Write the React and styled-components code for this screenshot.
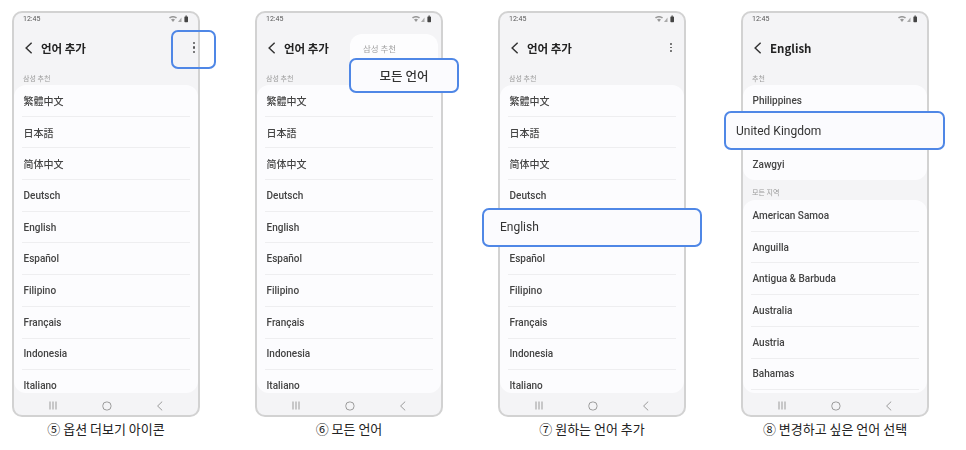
import React from 'react';
import styled, { createGlobalStyle } from 'styled-components';

const GlobalStyle = createGlobalStyle`
  html, body {
    margin: 0;
    padding: 0;
    background: #fff;
  }
  body {
    font-family: Roboto, "Noto Sans CJK KR", sans-serif;
  }
`;

const LANGUAGES = ['繁體中文', '日本語', '简体中文', 'Deutsch', 'English', 'Español', 'Filipino', 'Français', 'Indonesia', 'Italiano'];
const SUGGESTED = ['Philippines', 'United Kingdom', 'Zawgyi'];
const REGIONS = ['American Samoa', 'Anguilla', 'Antigua & Barbuda', 'Australia', 'Austria', 'Bahamas'];

const BackIcon = ({ size = 10, color = '#333', width = 1.2 }) => (
  <svg width={size} height={size} viewBox="0 0 10 10" fill="none">
    <path d="M7.2 .6 2.6 5l4.6 4.4" stroke={color} strokeWidth={width} />
  </svg>
);

const StatusIcons = () => (
  <svg width="20" height="8" viewBox="0 0 20 8">
    <path d="M0 2.4C2.4 .4 5.6 .4 8 2.4L7 3.5C5 2 3 2 1 3.5ZM2 4.4C3.2 3.4 4.8 3.4 6 4.4L4 7Z" fill="#999" />
    <path d="M9 7 12.5 2.6V7Z" fill="#aaa" />
    <rect x="15.4" y="1.4" width="3.6" height="5.8" rx=".7" fill="#444" />
    <rect x="16.4" y=".6" width="1.6" height="1" fill="#444" />
  </svg>
);

const NavIcons = () => (
  <>
    <svg width="10" height="9" viewBox="0 0 10 9" fill="none">
      <path d="M2 .5v8M5 .5v8M8 .5v8" stroke="#9a9a9a" strokeWidth="1" />
    </svg>
    <svg width="10" height="10" viewBox="0 0 10 10" fill="none">
      <rect x=".8" y="1" width="8.2" height="8" rx="3.6" stroke="#9a9a9a" strokeWidth="1" />
    </svg>
    <BackIcon size={10} color="#9a9a9a" width={1} />
  </>
);

const Page = styled.div`
  display: flex;
  gap: 55px;
  padding: 11px 0 0 12px;
  width: 966px;
  height: 450px;
  box-sizing: border-box;
  overflow: hidden;
`;

const Column = styled.div`
  position: relative;
  width: 188px;
  flex: none;
`;

const Phone = styled.div`
  display: flex;
  flex-direction: column;
  height: 406px;
  box-sizing: border-box;
  border: 2px solid #d2d2d2;
  border-radius: 10px;
  background: #f4f4f6;
  overflow: hidden;
  filter: blur(0.35px);
`;

const StatusBar = styled.div`
  display: flex;
  align-items: center;
  justify-content: space-between;
  height: 11px;
  flex: none;
  padding: 0 9px;
  font-size: 7px;
  color: #555;
`;

const Header = styled.div`
  display: flex;
  align-items: center;
  height: 47px;
  flex: none;
  padding-left: 9px;
  gap: 6px;
`;

const Title = styled.div`
  font-family: "Noto Sans CJK KR", Roboto, sans-serif;
  font-size: 11.5px;
  font-weight: 700;
  color: #222;
`;

const Dots = styled.div`
  display: flex;
  flex-direction: column;
  gap: 2px;
  margin-left: auto;
  margin-right: ${({ $large }) => ($large ? 3 : 12)}px;
  span {
    width: ${({ $large }) => ($large ? 2.2 : 1.8)}px;
    height: ${({ $large }) => ($large ? 2.2 : 1.8)}px;
    border-radius: 50%;
    background: #555;
  }
`;

const Section = styled.div`
  display: flex;
  align-items: center;
  flex: none;
  height: ${({ $height }) => $height}px;
  padding: ${({ $top }) => $top}px 0 0 9px;
  box-sizing: border-box;
  font-family: "Noto Sans CJK KR", sans-serif;
  font-size: 7px;
  color: #9a9a9a;
`;

const List = styled.div`
  flex: ${({ $fill }) => ($fill ? '1 1 0' : 'none')};
  min-height: 0;
  overflow: hidden;
  background: #fcfcfe;
  border-radius: 12px;
  padding: 0 8px;
`;

const Row = styled.div`
  display: flex;
  align-items: center;
  height: 31.7px;
  box-sizing: border-box;
  padding-left: 1.5px;
  border-bottom: ${({ $last }) => ($last ? 'none' : '1px solid #eeeef0')};
  font-size: 10px;
  font-weight: 500;
  color: #444;
`;

const NavBar = styled.div`
  display: flex;
  align-items: center;
  justify-content: space-between;
  flex: none;
  height: 22px;
  box-sizing: border-box;
  padding: 3px 33px 0 34px;
`;

const Caption = styled.div`
  margin-top: 3px;
  text-align: center;
  font-family: "Noto Sans CJK KR", sans-serif;
  font-size: 13px;
  line-height: 18px;
  color: #222;
  white-space: nowrap;
`;

const Highlight = styled.div`
  position: absolute;
  left: ${({ $left }) => $left}px;
  top: ${({ $top }) => $top}px;
  width: ${({ $width }) => $width}px;
  height: ${({ $height }) => $height}px;
  box-sizing: border-box;
  display: flex;
  align-items: center;
  justify-content: ${({ $center }) => ($center ? 'center' : 'flex-start')};
  padding: 0 0 ${({ $lift }) => $lift || 0}px ${({ $inset }) => $inset || 0}px;
  border: 2px solid #4f87e6;
  border-radius: 7px;
  background: ${({ $clear }) => ($clear ? 'transparent' : '#fbfbfe')};
  font-size: 12px;
  color: #333;
  filter: blur(0.3px);
`;

const HighlightKorean = styled.span`
  font-family: "Noto Sans CJK KR", sans-serif;
  font-size: 12.5px;
  font-weight: 500;
`;

const Popup = styled.div`
  position: absolute;
  left: 95px;
  top: 23px;
  width: 88px;
  height: 50px;
  box-sizing: border-box;
  padding: 8px 0 0 13px;
  border-radius: 12px;
  background: #fdfdfe;
  font-family: "Noto Sans CJK KR", sans-serif;
  font-size: 8.5px;
  color: #a2a2a2;
  filter: blur(0.3px);
`;

// covered: the row that sits under a highlight box, the box carries its label
const Screen = ({ title, dots, sections, covered }) => (
  <Phone>
    <StatusBar>
      <span>12:45</span>
      <StatusIcons />
    </StatusBar>
    <Header>
      <BackIcon size={12} />
      <Title>{title}</Title>
      {dots && (
        <Dots $large={dots === 'large'}>
          <span />
          <span />
          <span />
        </Dots>
      )}
    </Header>
    {sections.map((section, i) => (
      <React.Fragment key={section.label}>
        <Section $height={i === 0 ? 14 : 20} $top={i === 0 ? 0 : 3}>{section.label}</Section>
        <List $fill={i === sections.length - 1}>
          {section.rows.map((row, j) => (
            <Row key={row} $last={!section.open && j === section.rows.length - 1}>
              {row === covered ? '' : row}
            </Row>
          ))}
        </List>
      </React.Fragment>
    ))}
    <NavBar>
      <NavIcons />
    </NavBar>
  </Phone>
);

const recommended = [{ label: '삼성 추천', rows: LANGUAGES, open: true }];
const english = [
  { label: '추천', rows: SUGGESTED },
  { label: '모든 지역', rows: REGIONS, open: true },
];

export default function App() {
  return (
    <>
      <GlobalStyle />
      <Page>
        <Column>
          <Screen title="언어 추가" dots="large" sections={recommended} />
          <Highlight $left={159} $top={19} $width={45} $height={39} $clear />
          <Caption>⑤ 옵션 더보기 아이콘</Caption>
        </Column>
        <Column>
          <Screen title="언어 추가" sections={recommended} />
          <Popup>삼성 추천</Popup>
          <Highlight $left={94} $top={47} $width={110} $height={35} $center $lift={1}>
            <HighlightKorean>모든 언어</HighlightKorean>
          </Highlight>
          <Caption>⑥ 모든 언어</Caption>
        </Column>
        <Column>
          <Screen title="언어 추가" dots="small" sections={recommended} covered="English" />
          <Highlight $left={-16} $top={197} $width={220} $height={39} $inset={16} $lift={1}>English</Highlight>
          <Caption>⑦ 원하는 언어 추가</Caption>
        </Column>
        <Column>
          <Screen title="English" sections={english} covered="United Kingdom" />
          <Highlight $left={-17} $top={100} $width={221} $height={39} $inset={10}>United Kingdom</Highlight>
          <Caption>⑧ 변경하고 싶은 언어 선택</Caption>
        </Column>
      </Page>
    </>
  );
}
